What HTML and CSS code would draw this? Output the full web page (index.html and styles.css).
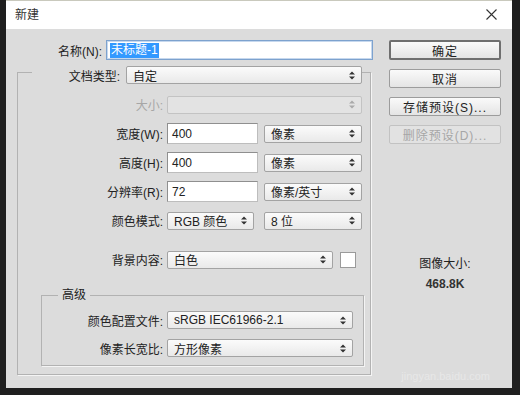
FILE: index.html
```html
<!DOCTYPE html>
<html lang="zh-CN">
<head>
  <meta charset="UTF-8">
  <title>新建</title>
  <link rel="stylesheet" href="styles.css">
</head>
<body>
  <div class="dialog">
    <div class="titlebar">
      <span class="title">新建</span>
      <svg class="close" width="11" height="11" viewBox="0 0 11 11"><path d="M0.5 0.5L10.5 10.5M10.5 0.5L0.5 10.5" stroke="#333" stroke-width="1.1" fill="none"/></svg>
    </div>

    <div class="content">
      <div class="main">
        <div class="name-row">
          <span class="name-label">名称(N):</span>
          <div class="input name-input"><span class="picked">未标题-1</span></div>
        </div>

        <fieldset class="group">
          <legend class="doc-row">
            <span class="doc-label">文档类型:</span>
            <div class="select doc-select"><span>自定</span><svg class="arrows" width="6" height="9" viewBox="0 0 6 9"><path d="M0 3.5L3 0.5L6 3.5ZM0 5.5L3 8.5L6 5.5Z" fill="#333"/></svg></div>
          </legend>

          <div class="row">
            <span class="label off">大小:</span>
            <div class="select off size-select"><span></span><svg class="arrows" width="6" height="9" viewBox="0 0 6 9"><path d="M0 3.5L3 0.5L6 3.5ZM0 5.5L3 8.5L6 5.5Z" fill="#aaa"/></svg></div>
          </div>
          <div class="row">
            <span class="label">宽度(W):</span>
            <div class="input num">400</div>
            <div class="select unit"><span>像素</span><svg class="arrows" width="6" height="9" viewBox="0 0 6 9"><path d="M0 3.5L3 0.5L6 3.5ZM0 5.5L3 8.5L6 5.5Z" fill="#333"/></svg></div>
          </div>
          <div class="row">
            <span class="label">高度(H):</span>
            <div class="input num">400</div>
            <div class="select unit"><span>像素</span><svg class="arrows" width="6" height="9" viewBox="0 0 6 9"><path d="M0 3.5L3 0.5L6 3.5ZM0 5.5L3 8.5L6 5.5Z" fill="#333"/></svg></div>
          </div>
          <div class="row">
            <span class="label">分辨率(R):</span>
            <div class="input num">72</div>
            <div class="select unit"><span>像素/英寸</span><svg class="arrows" width="6" height="9" viewBox="0 0 6 9"><path d="M0 3.5L3 0.5L6 3.5ZM0 5.5L3 8.5L6 5.5Z" fill="#333"/></svg></div>
          </div>
          <div class="row">
            <span class="label">颜色模式:</span>
            <div class="select mode-select"><span>RGB 颜色</span><svg class="arrows" width="6" height="9" viewBox="0 0 6 9"><path d="M0 3.5L3 0.5L6 3.5ZM0 5.5L3 8.5L6 5.5Z" fill="#333"/></svg></div>
            <div class="select unit"><span>8 位</span><svg class="arrows" width="6" height="9" viewBox="0 0 6 9"><path d="M0 3.5L3 0.5L6 3.5ZM0 5.5L3 8.5L6 5.5Z" fill="#333"/></svg></div>
          </div>
          <div class="row bg-row">
            <span class="label">背景内容:</span>
            <div class="select bg-select"><span>白色</span><svg class="arrows" width="6" height="9" viewBox="0 0 6 9"><path d="M0 3.5L3 0.5L6 3.5ZM0 5.5L3 8.5L6 5.5Z" fill="#333"/></svg></div>
            <div class="swatch"></div>
          </div>

          <fieldset class="advanced">
            <legend>高级</legend>
            <div class="row adv-row">
              <span class="label">颜色配置文件:</span>
              <div class="select adv-select"><span>sRGB IEC61966-2.1</span><svg class="arrows" width="6" height="9" viewBox="0 0 6 9"><path d="M0 3.5L3 0.5L6 3.5ZM0 5.5L3 8.5L6 5.5Z" fill="#333"/></svg></div>
            </div>
            <div class="row adv-row">
              <span class="label">像素长宽比:</span>
              <div class="select adv-select"><span>方形像素</span><svg class="arrows" width="6" height="9" viewBox="0 0 6 9"><path d="M0 3.5L3 0.5L6 3.5ZM0 5.5L3 8.5L6 5.5Z" fill="#333"/></svg></div>
            </div>
          </fieldset>
        </fieldset>
      </div>

      <div class="side">
        <div class="buttons">
          <div class="btn default">确定</div>
          <div class="btn">取消</div>
          <div class="btn">存储预设(S)...</div>
          <div class="btn off">删除预设(D)...</div>
        </div>
        <div class="size-info">
          <div>图像大小:</div>
          <div class="size-value">468.8K</div>
        </div>
      </div>
    </div>

    <div class="mark">jingyan.baidu.com</div>
  </div>
</body>
</html>
```

FILE: styles.css
```css
body {
  margin: 0;
  background: #1f1f1f;
  font-family: "Liberation Sans", "Noto Sans CJK SC", sans-serif;
  font-size: 12px;
  color: #222;
}
.dialog {
  position: relative;
  width: 506px;
  height: 388px;
  margin-left: 6px;
  background: #dcdcdc;
  border-top: 1px solid #c9c9bd;
  box-sizing: border-box;
}
.titlebar {
  height: 28px;
  background: #ffffff;
  display: flex;
  align-items: center;
  justify-content: space-between;
  padding: 0 15px 0 9px;
}
.title {
  color: #333;
  line-height: 14px;
}
.close {
  margin-top: -1px;
}
.content {
  display: flex;
}
.main {
  width: 374px;
}
.name-row {
  display: flex;
  align-items: center;
  margin-top: 11px;
  height: 20px;
}
.name-label {
  width: 96px;
  text-align: right;
  margin-right: 4px;
}
.input {
  height: 21px;
  box-sizing: border-box;
  background: #ffffff;
  border: 1px solid #8f8f8f;
  border-bottom-color: #bdbdbd;
  border-right-color: #bdbdbd;
  display: flex;
  align-items: center;
  padding-left: 4px;
}
.name-input {
  width: 267px;
  height: 20px;
  border: 1px solid #7da2ce;
  box-shadow: inset 0 0 0 1px #c6d8ee;
  padding-left: 3px;
}
.picked {
  background: #3399ff;
  color: #ffffff;
  line-height: 15px;
  padding: 0 1px;
}
.group {
  margin: 0 0 0 11px;
  width: 354px;
  box-sizing: border-box;
  border: 1px solid #b2b2b2;
  box-shadow: 1px 1px 0 #f4f4f4;
  padding: 6px 6px 8px 14px;
}
.doc-row {
  display: flex;
  align-items: center;
  padding: 6px 0 0 0;
  background: #dcdcdc;
}
.doc-label {
  width: 88px;
  text-align: right;
  margin-right: 6px;
}
.select {
  height: 18px;
  box-sizing: border-box;
  border: 1px solid #a3a3a3;
  border-radius: 2px;
  background: linear-gradient(#fbfbfb, #e9e9e9);
  display: flex;
  align-items: center;
  justify-content: space-between;
  padding: 0 6px 0 6px;
}
.doc-select {
  width: 236px;
}
.row {
  display: flex;
  align-items: center;
  height: 29px;
}
.label {
  width: 131px;
  text-align: right;
  margin-right: 4px;
}
.off {
  color: #a6a6a6;
}
.select.off {
  background: #e3e3e3;
  border-color: #c3c3c3;
}
.size-select {
  width: 195px;
}
.num {
  width: 91px;
}
.unit {
  width: 98px;
  margin-left: 6px;
}
.mode-select {
  width: 87px;
  margin-right: 4px;
}
.bg-row {
  margin-top: 10px;
}
.bg-select {
  width: 166px;
}
.swatch {
  width: 16px;
  height: 16px;
  box-sizing: border-box;
  margin-left: 7px;
  background: #ffffff;
  border: 1px solid #9a9a9a;
}
.advanced {
  margin: 13px 0 0 9px;
  width: 323px;
  box-sizing: border-box;
  border: 1px solid #b2b2b2;
  box-shadow: 1px 1px 0 #f4f4f4;
  padding: 3px 4px 3px 16px;
}
.advanced legend {
  padding: 0 4px;
  line-height: 16px;
  background: #dcdcdc;
}
.adv-row {
  height: 28px;
}
.adv-row .label {
  width: 105px;
}
.adv-select {
  width: 186px;
}
.side {
  width: 112px;
  margin-left: 9px;
  padding-top: 11px;
}
.buttons {
  display: flex;
  flex-direction: column;
  gap: 9px;
}
.btn {
  height: 19px;
  box-sizing: border-box;
  border: 1px solid #9c9c9c;
  border-radius: 2px;
  background: linear-gradient(#fafafa, #e4e4e4);
  display: flex;
  align-items: center;
  justify-content: center;
  letter-spacing: 1px;
}
.btn.default {
  height: 20px;
  border: 2px solid #6f6f6f;
}
.btn.off {
  background: #e2e2e2;
  border-color: #c2c2c2;
}
.size-info {
  margin-top: 110px;
  text-align: center;
  line-height: 20px;
}
.size-value {
  font-weight: bold;
  color: #333;
}
.mark {
  position: absolute;
  right: 22px;
  bottom: 6px;
  color: rgba(255, 255, 255, 0.35);
  font-size: 11px;
}
```
